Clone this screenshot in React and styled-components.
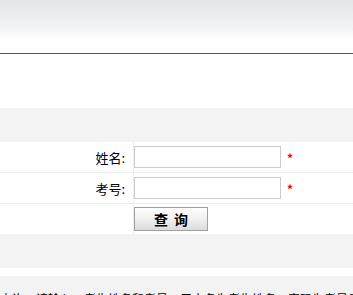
import styled, { createGlobalStyle } from 'styled-components';

const Global = createGlobalStyle`
  html, body {
    margin: 0;
    padding: 0;
    background: #fff;
    overflow: hidden;
  }
  body {
    font-family: "Noto Sans CJK SC", "Liberation Sans", sans-serif;
    font-size: 12px;
    color: #000;
  }
`;

const Page = styled.div`
  width: 353px;
  display: flex;
  flex-direction: column;
`;

const Header = styled.div`
  height: 53px;
  background: linear-gradient(to bottom, #e4e5e7 0%, #f3f4f5 55%, #ffffff 75%, #ffffff 100%);
  border-bottom: 1px solid #1f5fa8;
`;

const Spacer = styled.div`
  height: ${(p) => p.$h}px;
  background: #fff;
`;

const Band = styled.div`
  height: ${(p) => p.$h}px;
  background: #f3f3f3;
`;

const Form = styled.div`
  display: grid;
  grid-template-columns: 134px 1fr;
`;

const Label = styled.div`
  height: 30px;
  border-right: 1px solid #eeeeee;
  border-bottom: ${(p) => (p.$last ? 'none' : '1px solid #eeeeee')};
  display: flex;
  align-items: center;
  justify-content: flex-end;
  padding-right: 8px;
  font-size: 13px;
  line-height: 13px;
`;

const Field = styled.div`
  height: 30px;
  border-bottom: ${(p) => (p.$last ? 'none' : '1px solid #eeeeee')};
  display: flex;
  align-items: center;
`;

const Input = styled.input`
  box-sizing: border-box;
  width: 147px;
  height: 22px;
  margin: 0;
  border: 1px solid #cccccc;
  background: #fff;
  outline: none;
`;

const Star = styled.span`
  color: #ff0000;
  margin-left: 6px;
  font-size: 12px;
  font-weight: bold;
`;

const Button = styled.button`
  box-sizing: border-box;
  width: 74px;
  height: 24px;
  margin: 0;
  padding: 0;
  border: 1px solid #a0a0a0;
  background: linear-gradient(to bottom, #ffffff 0%, #f0f0f0 50%, #dcdcdc 100%);
  font-family: "Noto Sans CJK SC", sans-serif;
  font-size: 14px;
  font-weight: bold;
  letter-spacing: 6px;
  text-indent: 6px;
  color: #000;
`;

const Note = styled.div`
  background: #f3f3f3;
  padding: 14px 0 8px 0;
  line-height: 18px;
  white-space: nowrap;
  overflow: hidden;
  font-size: 12px;
`;

export default function App() {
  return (
    <Page>
      <Global />
      <Header />
      <Spacer $h={54} />
      <Band $h={34} />
      <Form>
        <Label>姓名:</Label>
        <Field>
          <Input type="text" />
          <Star>*</Star>
        </Field>
        <Label>考号:</Label>
        <Field>
          <Input type="text" />
          <Star>*</Star>
        </Field>
        <Label $last />
        <Field $last>
          <Button>查询</Button>
        </Field>
      </Form>
      <Band $h={34} />
      <Spacer $h={8} />
      <Note>查询，请输入：考生姓名和考号，用户名为考生姓名，密码为考号后六位</Note>
    </Page>
  );
}
